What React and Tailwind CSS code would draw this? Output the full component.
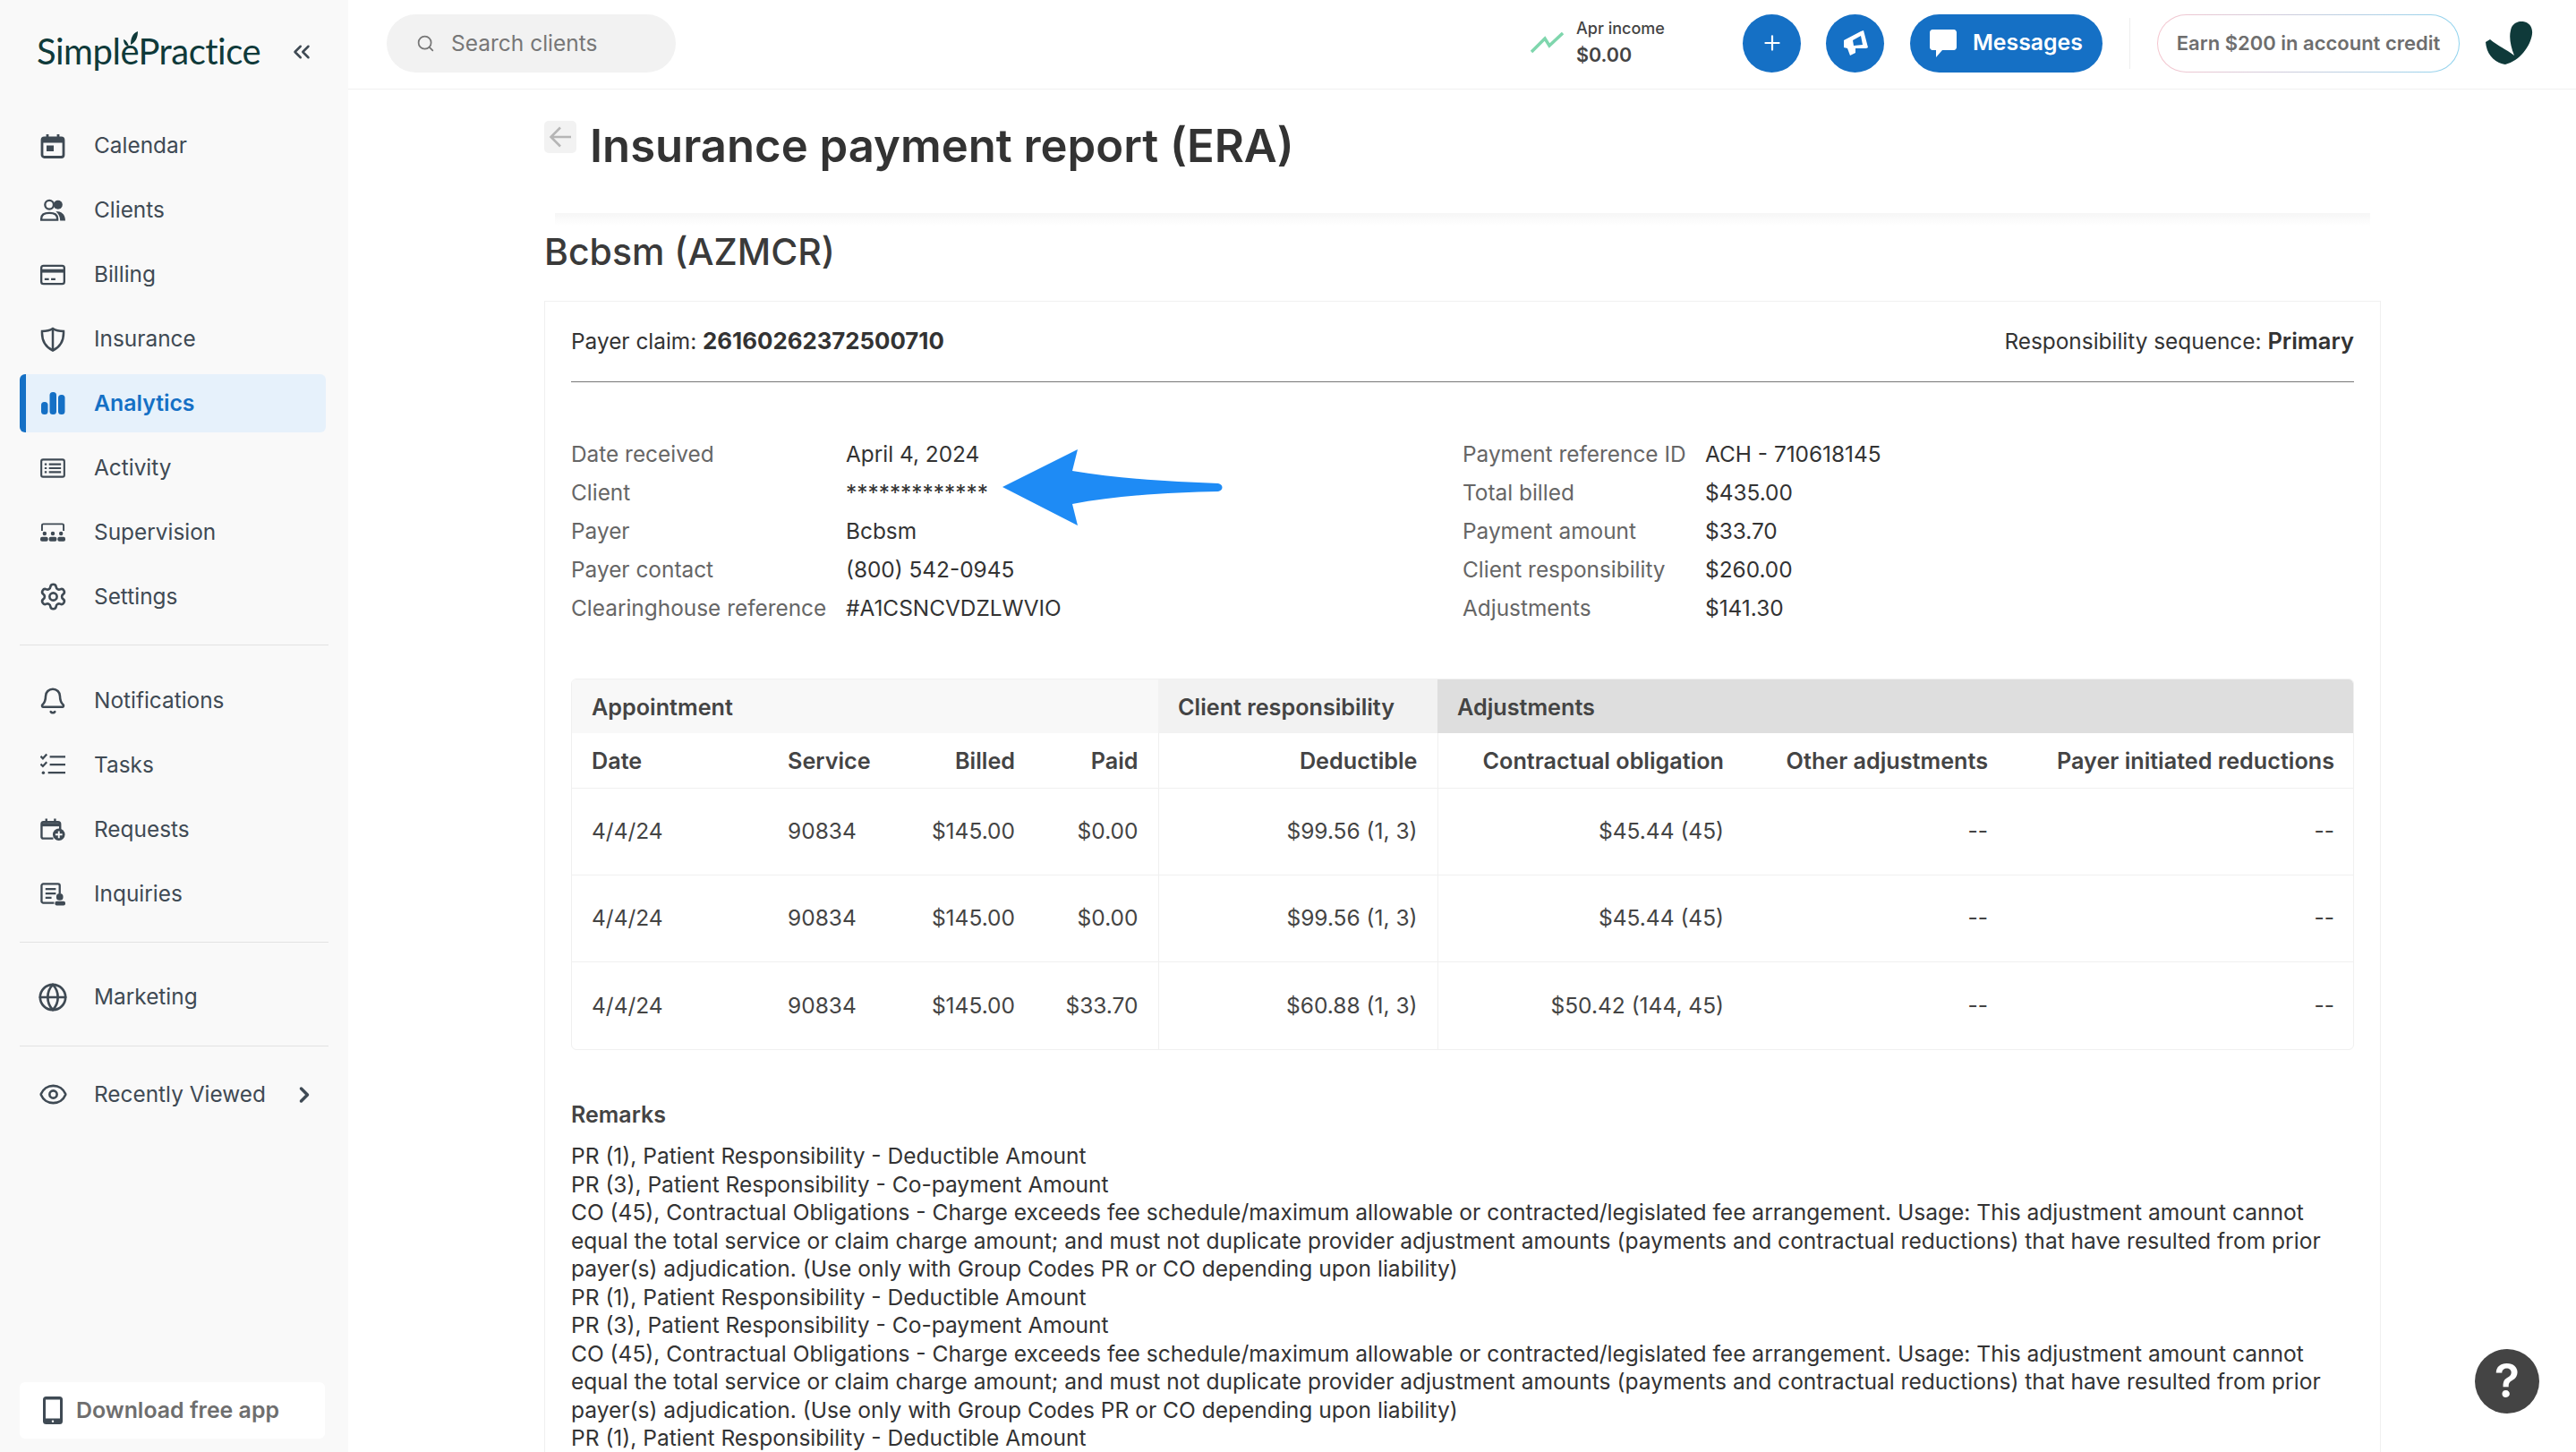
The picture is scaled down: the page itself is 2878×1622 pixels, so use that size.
import React from 'react';
import { ChevronsLeft, ChevronRight, Search, Plus, Bell, Globe, Eye, Settings } from 'lucide-react';

const Calendar = () => (
    <svg width="28" height="28" viewBox="0 0 28 28" fill="none" stroke="currentColor" strokeWidth="2.800">
        <rect x="2" y="5" width="24" height="21.500" rx="2.500" />
        <path d="M2 8h24" strokeWidth="5" />
        <path d="M8 1v5M20 1v5" />
        <rect x="7" y="13.500" width="8" height="6.500" fill="currentColor" stroke="none" />
    </svg>
);

const Clients = () => (
    <svg width="29" height="28" viewBox="0 0 29 28" fill="none" stroke="currentColor" strokeWidth="2.400">
        <circle cx="10.500" cy="7.500" r="5" />
        <path d="M1.200 25v-1.500c0-4 3-6.500 9.300-6.500s9.300 2.500 9.300 6.500V25z" />
        <circle cx="20.500" cy="7.500" r="5.200" fill="currentColor" stroke="none" />
        <path d="M18 15c6 0 11 3 11 11h-6c0-5-2-8-5-11z" fill="currentColor" stroke="none" />
    </svg>
);

const Billing = () => (
    <svg width="29" height="28" viewBox="0 0 29 28" fill="none" stroke="currentColor" strokeWidth="2.400">
        <rect x="1.200" y="3.500" width="26.600" height="21" rx="2.500" />
        <path d="M1 9.500h27" strokeWidth="4" />
        <path d="M5 19h5M12.500 19h5" />
    </svg>
);

const Shield = () => (
    <svg width="28" height="28" viewBox="0 0 28 28" fill="none" stroke="currentColor" strokeWidth="2.500">
        <path d="M14 2c3 2 8 3 12 3 .5 10-2.500 17-12 21.500C4.500 22 1.500 15 2 5c4 0 9-1 12-3z" />
        <path d="M14 2v24" />
    </svg>
);

const Bars = () => (
    <svg width="28" height="28" viewBox="0 0 28 28" fill="currentColor">
        <rect x="1" y="12" width="7.500" height="14" rx="3.500" />
        <rect x="10.500" y="1" width="7.500" height="25" rx="3.500" />
        <rect x="20" y="4" width="7.500" height="22" rx="3.500" />
    </svg>
);

const Activity = () => (
    <svg width="29" height="28" viewBox="0 0 29 28" fill="none" stroke="currentColor" strokeWidth="2.200">
        <rect x="1.200" y="4" width="26.600" height="20" rx="2" />
        <path d="M5 9.500h2.500M5 14h2.500M5 18.500h2.500M10 9.500h14M10 14h14M10 18.500h14" />
    </svg>
);

const Supervision = () => (
    <svg width="29" height="28" viewBox="0 0 29 28" fill="none" stroke="currentColor" strokeWidth="2">
        <path d="M2 12V5.500C2 4.700 2.600 4 3.500 4h22c.9 0 1.500.7 1.500 1.500V12" />
        <g fill="currentColor" stroke="none">
            <circle cx="5" cy="15" r="2.300" />
            <circle cx="14.500" cy="15" r="2.300" />
            <circle cx="24" cy="15" r="2.300" />
            <rect x="0" y="19" width="9" height="5" rx="2" />
            <rect x="10" y="19" width="9" height="5" rx="2" />
            <rect x="20" y="19" width="9" height="5" rx="2" />
        </g>
    </svg>
);

const Tasks = () => (
    <svg width="29" height="28" viewBox="0 0 29 28" fill="none" stroke="currentColor" strokeWidth="2.300">
        <path d="M0.500 3.500l2.500 2.500L7.500 1M0.500 12.500l2.500 2.500L7.500 10" />
        <path d="M11 4h18M11 13h18M9 22.500h20" />
        <circle cx="3.500" cy="22.500" r="1.800" fill="currentColor" stroke="none" />
    </svg>
);

const Requests = () => (
    <svg width="29" height="28" viewBox="0 0 29 28" fill="none" stroke="currentColor" strokeWidth="2.500">
        <path d="M15 24H3.500C2.500 24 1.500 23.500 1.500 22V7.500C1.500 6 2.500 5 3.500 5h17c1.500 0 2.500 1 2.500 2.500V13" />
        <path d="M1.500 8h21.500" strokeWidth="4" />
        <path d="M7 1v5M17 1v5" />
        <circle cx="21.500" cy="19.500" r="7" fill="currentColor" stroke="none" />
        <path d="M21.500 15.500v8M17.500 19.500h8" stroke="#f9f9f9" strokeWidth="2" />
    </svg>
);

const Inquiries = () => (
    <svg width="29" height="28" viewBox="0 0 29 28" fill="none" stroke="currentColor" strokeWidth="2.400">
        <path d="M16 24H3.500C2.500 24 1.500 23 1.500 22V4c0-1 1-2 2-2h17c1 0 2 1 2 2v9" />
        <path d="M6 8h12M6 13h12M6 18h7" />
        <circle cx="22.500" cy="17" r="4" fill="currentColor" stroke="none" />
        <rect x="17" y="22" width="12" height="5" rx="2" fill="currentColor" stroke="none" />
    </svg>
);

const Row = ({ icon, label, active, right }) => (
    <div className={active
        ? 'flex items-center h-[65px] mr-[3px] pl-[16px] border-l-[7px] border-[#1570c5] bg-[#e6f1fb] rounded-[6px] text-[#1570c5] font-semibold'
        : 'flex items-center h-[65px] mr-[3px] pl-[23px] text-[#3f4a54]'}>
        <span className="w-[28px] h-[28px] shrink-0 flex items-center justify-center">{icon}</span>
        <span className={active ? 'ml-[32px] text-[24.800px]' : 'ml-[32px] text-[24.400px]'}>{label}</span>
        {right}
    </div>
);

const Sidebar = () => (
    <aside className="w-[389px] shrink-0 h-full flex flex-col bg-[#f9f9f9] px-[22px]">
        <div className="h-[130px] shrink-0 flex items-start">
            <div className="relative mt-[32px] ml-[19px] text-[40px] leading-[50px] tracking-[-0.5px] text-[#0f3a3a] font-['Lato',sans-serif]">
                SimplePractice
                <svg className="absolute left-[97px] top-[3px]" width="16" height="17" viewBox="0 0 16 17" fill="#0f3a3a">
                    <path d="M0 9c3 1 5 4 6 8-3 0-6-3-6-8zM8 15c0-7 2-13 8-15 0 6-2 12-8 15z" />
                </svg>
            </div>
            <ChevronsLeft className="ml-auto mt-[43px] mr-[15px] text-[#3f4a54]" size={30} strokeWidth={2} />
        </div>
        <nav className="flex flex-col gap-[7px]">
            <Row icon={<Calendar />} label="Calendar" />
            <Row icon={<Clients />} label="Clients" />
            <Row icon={<Billing />} label="Billing" />
            <Row icon={<Shield />} label="Insurance" />
            <Row icon={<Bars />} label="Analytics" active />
            <Row icon={<Activity />} label="Activity" />
            <Row icon={<Supervision />} label="Supervision" />
            <Row icon={<Settings className="shrink-0" size={33} strokeWidth={1.900} />} label="Settings" />
        </nav>
        <div className="mt-[21px] border-t border-[#e2e2e2]" />
        <nav className="mt-[29px] flex flex-col gap-[7px]">
            <Row icon={<Bell className="shrink-0" size={32} strokeWidth={1.900} />} label="Notifications" />
            <Row icon={<Tasks />} label="Tasks" />
            <Row icon={<Requests />} label="Requests" />
            <Row icon={<Inquiries />} label="Inquiries" />
        </nav>
        <div className="mt-[21px] border-t border-[#e2e2e2]" />
        <div className="mt-[28px]">
            <Row icon={<Globe className="shrink-0" size={34} strokeWidth={1.900} />} label="Marketing" />
        </div>
        <div className="mt-[22px] border-t border-[#e2e2e2]" />
        <div className="mt-[21px]">
            <Row icon={<Eye className="shrink-0" size={33} strokeWidth={1.900} />} label="Recently Viewed"
                right={<ChevronRight className="ml-auto mr-[10px]" size={28} strokeWidth={3} />} />
        </div>
        <div className="mt-auto mb-[15px] h-[63px] w-[341px] flex items-center bg-white rounded-[6px] pl-[26px]">
            <svg width="22" height="31" viewBox="0 0 22 31" fill="none">
                <rect x="0" y="0" width="22" height="31" rx="3.500" fill="#3f4a54" />
                <rect x="3" y="3.500" width="16" height="21" fill="#ffffff" />
                <circle cx="11" cy="27.800" r="1.200" fill="#ffffff" />
            </svg>
            <span className="ml-[15px] text-[24.900px] font-semibold text-[#6e6e6e]">Download free app</span>
        </div>
    </aside>
);

const TopBar = () => (
    <header className="h-[100px] shrink-0 flex items-center border-b border-[#f0f0f0] pb-[3px] pl-[43px] pr-[48px]">
        <div className="w-[323px] h-[65px] flex items-center rounded-full bg-[#f2f2f2] pl-[33px] text-[#777777]">
            <Search size={21} strokeWidth={2} />
            <span className="ml-[18px] text-[24.500px]">Search clients</span>
        </div>
        <svg className="ml-auto" width="37" height="24" viewBox="0 0 37 24" fill="none" stroke="#7fd6ad" strokeWidth="3.500">
            <path d="M1 22l15-15 5 8L36 1" />
        </svg>
        <div className="ml-[14px] w-[186px] -mt-[2px] text-[#444444]">
            <div className="text-[18px] leading-[28px] font-medium">Apr income</div>
            <div className="text-[21.500px] leading-[30px] font-semibold">$0.00</div>
        </div>
        <button className="w-[65px] h-[65px] rounded-full bg-[#1570c5] text-white flex items-center justify-center">
            <Plus size={26} strokeWidth={2} />
        </button>
        <button className="ml-[28px] w-[65px] h-[65px] rounded-full bg-[#1570c5] flex items-center justify-center">
            <svg width="28" height="28" viewBox="0 0 28 28" fill="#ffffff" fillRule="evenodd">
                <path d="M1 11 20 1 23 0 28 19 26 20 14 20 14 25 8 28 5 20 1 19ZM11 11 20 6 22 16 12 17Z" />
            </svg>
        </button>
        <button className="ml-[29px] w-[215px] h-[65px] rounded-full bg-[#1570c5] text-white flex items-center pl-[22px]">
            <svg width="30" height="34" viewBox="0 0 30 34" fill="#ffffff">
                <path d="M3 2h24c1.500 0 3 1.500 3 3v17c0 1.500-1.500 3-3 3H14l-7 8v-8H3c-1.500 0-3-1.500-3-3V5c0-1.500 1.500-3 3-3z" />
            </svg>
            <span className="ml-[18px] text-[24.800px] font-semibold">Messages</span>
        </button>
        <div className="ml-[30px] w-px h-[57px] bg-[#eeeeee]" />
        <div className="ml-[30px] w-[338px] h-[65px] rounded-full p-px bg-gradient-to-r from-[#f5c6cf] to-[#8fd3ee]">
            <div className="w-full h-full rounded-full bg-white flex items-center justify-center text-[22px] font-semibold text-[#6e6e6e]">
                Earn $200 in account credit
            </div>
        </div>
        <svg className="ml-[29px]" width="53" height="48" viewBox="0 0 53 48" fill="#0f3a3a">
            <path d="M38 0C47-1 53 5 52 14 50 28 38 44 22 48 9 46 1 36 0 23L5 20C12 26 24 32 32 38 28 28 26 18 28 10 29 4 33 1 38 0Z" />
        </svg>
    </header>
);

const info = [
    ['Date received', 'April 4, 2024'],
    ['Client', '*************'],
    ['Payer', 'Bcbsm'],
    ['Payer contact', '(800) 542-0945'],
    ['Clearinghouse reference', '#A1CSNCVDZLWVIO'],
];

const totals = [
    ['Payment reference ID', 'ACH - 710618145'],
    ['Total billed', '$435.00'],
    ['Payment amount', '$33.70'],
    ['Client responsibility', '$260.00'],
    ['Adjustments', '$141.30'],
];

const InfoList = ({ rows, labelWidth }) => (
    <div className={labelWidth}>
        {rows.map(([label, value]) => (
            <div key={label} className="flex h-[43px] items-center">
                <span className="w-full text-[#666666]">{label}</span>
                <span className="w-full text-[#333333]">{value}</span>
            </div>
        ))}
    </div>
);

const claims = [
    ['4/4/24', '90834', '$145.00', '$0.00', '$99.56 (1, 3)', '$45.44 (45)', 'h-[97px]'],
    ['4/4/24', '90834', '$145.00', '$0.00', '$99.56 (1, 3)', '$45.44 (45)', 'h-[97px]'],
    ['4/4/24', '90834', '$145.00', '$33.70', '$60.88 (1, 3)', '$50.42 (144, 45)', 'h-[98px]'],
];

const th = 'px-[22px] pt-[3px] font-semibold text-[25.200px]';
const td = 'px-[22px] font-normal text-[24.500px]';

const ClaimTable = () => (
    <div className="rounded-[6px] border border-[#f0f0f0] overflow-hidden">
        <table className="w-full table-fixed border-collapse text-[#444444]">
            <colgroup>
                <col className="w-[219px]" />
                <col className="w-[142px]" />
                <col className="w-[156px]" />
                <col className="w-[138px]" />
                <col className="w-[312px]" />
                <col className="w-[342px]" />
                <col className="w-[295px]" />
                <col className="w-[387px]" />
            </colgroup>
            <thead>
                <tr className="h-[60px]">
                    <th colSpan={4} className={`${th} text-left bg-[#f8f8f8]`}>Appointment</th>
                    <th className={`${th} text-left bg-[#f2f2f2]`}>Client responsibility</th>
                    <th colSpan={3} className={`${th} text-left bg-[#dedede]`}>Adjustments</th>
                </tr>
                <tr className="h-[61px] border-b border-[#f0f0f0]">
                    <th className={`${th} text-left`}>Date</th>
                    <th className={`${th} text-left`}>Service</th>
                    <th className={`${th} text-right`}>Billed</th>
                    <th className={`${th} text-right border-r border-[#f0f0f0]`}>Paid</th>
                    <th className={`${th} text-right border-r border-[#f0f0f0]`}>Deductible</th>
                    <th className={`${th} text-right`}>Contractual obligation</th>
                    <th className={`${th} text-right`}>Other adjustments</th>
                    <th className={`${th} text-right`}>Payer initiated reductions</th>
                </tr>
            </thead>
            <tbody>
                {claims.map((row, i) => (
                    <tr key={i} className={`${row[6]} border-b last:border-b-0 border-[#f0f0f0]`}>
                        <td className={td}>{row[0]}</td>
                        <td className={td}>{row[1]}</td>
                        <td className={`${td} text-right`}>{row[2]}</td>
                        <td className={`${td} text-right border-r border-[#f0f0f0]`}>{row[3]}</td>
                        <td className={`${td} text-right border-r border-[#f0f0f0]`}>{row[4]}</td>
                        <td className={`${td} text-right`}>{row[5]}</td>
                        <td className={`${td} text-right`}>--</td>
                        <td className={`${td} text-right`}>--</td>
                    </tr>
                ))}
            </tbody>
        </table>
    </div>
);

const co45 = 'CO (45), Contractual Obligations - Charge exceeds fee schedule/maximum allowable or contracted/legislated fee arrangement. Usage: This adjustment amount cannot equal the total service or claim charge amount; and must not duplicate provider adjustment amounts (payments and contractual reductions) that have resulted from prior payer(s) adjudication. (Use only with Group Codes PR or CO depending upon liability)';

const remarks = [
    'PR (1), Patient Responsibility - Deductible Amount',
    'PR (3), Patient Responsibility - Co-payment Amount',
    co45,
    'PR (1), Patient Responsibility - Deductible Amount',
    'PR (3), Patient Responsibility - Co-payment Amount',
    co45,
    'PR (1), Patient Responsibility - Deductible Amount',
];

const Report = () => (
    <main className="flex-1 overflow-hidden pl-[219px] pr-[218px] text-[24.400px] text-[#333333]">
        <div className="mt-[35px] flex items-start">
            <button className="w-[36px] h-[36px] rounded-[5px] bg-[#f2f2f2] flex items-center justify-center">
                <svg width="26" height="24" viewBox="0 0 26 24" fill="none" stroke="#b5b5b5" strokeWidth="2.500">
                    <path d="M25 12H3M13 1.500 2.500 12 13 22.500" />
                </svg>
            </button>
            <h1 className="ml-[15px] text-[50.800px] leading-[56px] font-semibold text-[#333333]">Insurance payment report (ERA)</h1>
        </div>
        <div className="mt-[47px] mx-[12px] h-[14px] bg-gradient-to-b from-[#f6f6f6] to-white" />
        <h2 className="text-[41px] leading-[58px] font-medium text-[#3a3a3a]">Bcbsm (AZMCR)</h2>
        <section className="relative mt-[26px] border border-[#f0f0f0] px-[29px] pb-[40px]">
            <div className="h-[90px] flex items-center justify-between border-b border-[#777777]">
                <div>Payer claim: <b className="font-bold text-[25.800px]">26160262372500710</b></div>
                <div>Responsibility sequence: <b className="font-semibold text-[25.500px]">Primary</b></div>
            </div>
            <div className="mt-[59px] flex">
                <InfoList rows={info} labelWidth="w-[996px] [&>div>span:first-child]:w-[307px] [&>div>span:first-child]:shrink-0" />
                <InfoList rows={totals} labelWidth="flex-1 [&>div>span:first-child]:w-[271px] [&>div>span:first-child]:shrink-0" />
            </div>
            <div className="mt-[57px]">
                <ClaimTable />
            </div>
            <div className="mt-[57px] font-semibold text-[25px] leading-[31px] text-[#444444]">Remarks</div>
            <div className="mt-[15px] text-[24.550px] leading-[31.500px] text-[#333333]">
                {remarks.map((line, i) => <div key={i}>{line}</div>)}
            </div>
            {/* blue annotation arrow dropped on top of the screenshot */}
            <svg className="absolute left-[511px] top-[165px]" width="246" height="86" viewBox="0 0 246 86" fill="#1e8bf5">
                <path d="M0 42 84 0 78 24C130 33 190 36 241 38 247 39 247 46 241 47 190 48 130 51 78 61L84 85Z" />
            </svg>
        </section>
    </main>
);

const App = () => (
    <div className="relative flex h-screen w-full overflow-hidden bg-white font-['Inter',sans-serif]">
        <Sidebar />
        <div className="flex-1 min-w-0 flex flex-col">
            <TopBar />
            <Report />
        </div>
        <button className="absolute left-[2765px] top-[1507px] w-[72px] h-[72px] rounded-full bg-[#444444] text-white text-[52px] leading-[72px] font-semibold">?</button>
    </div>
);

export default App;
